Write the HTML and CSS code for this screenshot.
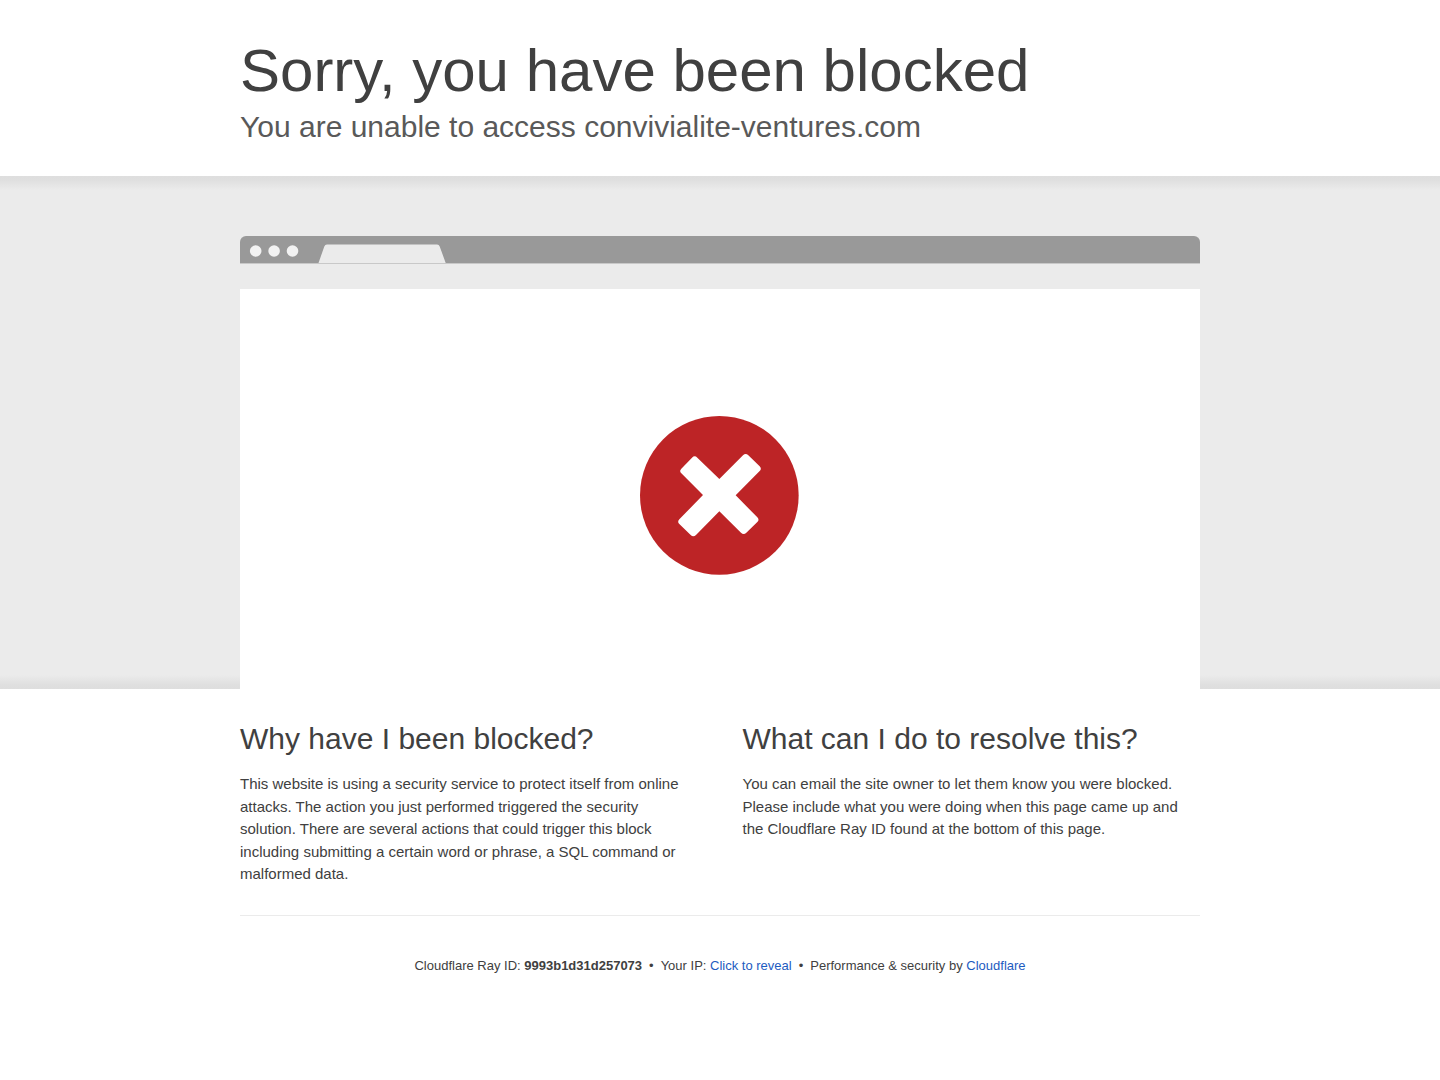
FILE: index.html
```html
<!DOCTYPE html>
<html lang="en">
<head>
<meta charset="utf-8">
<meta name="viewport" content="width=device-width, initial-scale=1">
<title>Attention Required! | Cloudflare</title>
<link rel="stylesheet" href="styles.css">
</head>
<body>
<header class="wrapper header">
  <h1 class="title">Sorry, you have been blocked</h1>
  <h2 class="subtitle">You are unable to access convivialite-ventures.com</h2>
</header>

<section class="highlight">
  <div class="wrapper">
    <div class="browser-bar">
      <svg class="browser-controls" width="210" height="27" viewBox="0 0 210 27" aria-hidden="true">
        <g fill="#f2f2f2">
          <circle cx="15.7" cy="15" r="5.8"/>
          <circle cx="34.1" cy="15" r="5.8"/>
          <circle cx="52.5" cy="15" r="5.8"/>
        </g>
        <path fill="#ebebeb" d="M78.500 27 L84.300 10.500 Q85 8.500 87 8.500 H197 Q199 8.500 199.700 10.500 L205.700 27 Z"/>
      </svg>
    </div>
    <div class="browser-page">
      <svg class="error-icon" viewBox="30 30 480 480" role="img" aria-label="Blocked">
        <circle cx="268" cy="268" r="238" fill="#bd2426"/>
        <path fill="#fff" d="M268 219 L339 148 Q347 140 355 148 L389 181 Q396 188 389 195 L317 268 L382 334 Q389 341 382 348 L349 380 Q341 388 333 380 L268 316 L198 387 Q190 395 182 387 L148 354 Q141 347 148 340 L219 267 L154 202 Q147 195 154 188 L186 155 Q194 147 202 155 Z"/>
      </svg>
    </div>
  </div>
</section>

<main class="wrapper">
  <div class="columns">
    <section>
      <h2 class="heading">Why have I been blocked?</h2>
      <p>This website is using a security service to protect itself from online attacks. The action you just performed triggered the security solution. There are several actions that could trigger this block including submitting a certain word or phrase, a SQL command or malformed data.</p>
    </section>
    <section>
      <h2 class="heading">What can I do to resolve this?</h2>
      <p>You can email the site owner to let them know you were blocked. Please include what you were doing when this page came up and the Cloudflare Ray ID found at the bottom of this page.</p>
    </section>
  </div>
</main>

<footer class="wrapper">
  <p class="footer">
    <span>Cloudflare Ray ID: <strong>9993b1d31d257073</strong></span>
    <span>•</span>
    <span>Your IP: <button type="button" class="reveal">Click to reveal</button></span>
    <span>•</span>
    <span>Performance &amp; security by <a class="link" href="https://www.cloudflare.com/">Cloudflare</a></span>
  </p>
</footer>
</body>
</html>
```

FILE: styles.css
```css
* {
  box-sizing: border-box;
  margin: 0;
  padding: 0;
}

body {
  background: #fff;
  color: #404040;
  font-family: "Liberation Sans", Arial, sans-serif;
  font-size: 15px;
  line-height: 1.5;
}

.wrapper {
  width: 90%;
  max-width: 960px;
  margin: 0 auto;
}

.header {
  padding: 35px 0 30px;
}

.title {
  font-size: 60px;
  font-weight: 400;
  line-height: 72px;
}

.subtitle {
  color: #595959;
  font-size: 30px;
  font-weight: 400;
  line-height: 39px;
}

.highlight {
  padding-top: 60px;
  background:
    linear-gradient(to bottom, #dedede, #dfdfdf 4px, #ebebeb 14px, transparent 14px),
    linear-gradient(to top, #dedede, #dfdfdf 4px, #ebebeb 14px, transparent 14px),
    #ebebeb;
}

.browser-bar {
  border-bottom: 1px solid #c8c8c8;
  border-radius: 6px 6px 0 0;
  background: #999;
}

.browser-controls {
  display: block;
}

.browser-page {
  display: flex;
  justify-content: center;
  padding: 127px 0 113px;
  border-top: 25px solid #ebebeb;
  background: #fff;
}

.error-icon {
  width: 160px;
  height: 160px;
}

.columns {
  display: grid;
  grid-template-columns: repeat(auto-fit, minmax(300px, 1fr));
  gap: 45px;
  padding: 30px 0 29px;
  border-bottom: 1px solid #ebebeb;
}

.heading {
  margin-bottom: 15px;
  font-size: 30px;
  font-weight: 400;
  line-height: 39px;
}

.footer {
  display: flex;
  flex-wrap: wrap;
  justify-content: center;
  column-gap: 7px;
  padding: 40px 0;
  font-size: 13px;
}

.reveal {
  border: 0;
  background: none;
  color: #1d5bbf;
  font: inherit;
  cursor: pointer;
}

.link {
  color: #1d5bbf;
  text-decoration: none;
}
```
